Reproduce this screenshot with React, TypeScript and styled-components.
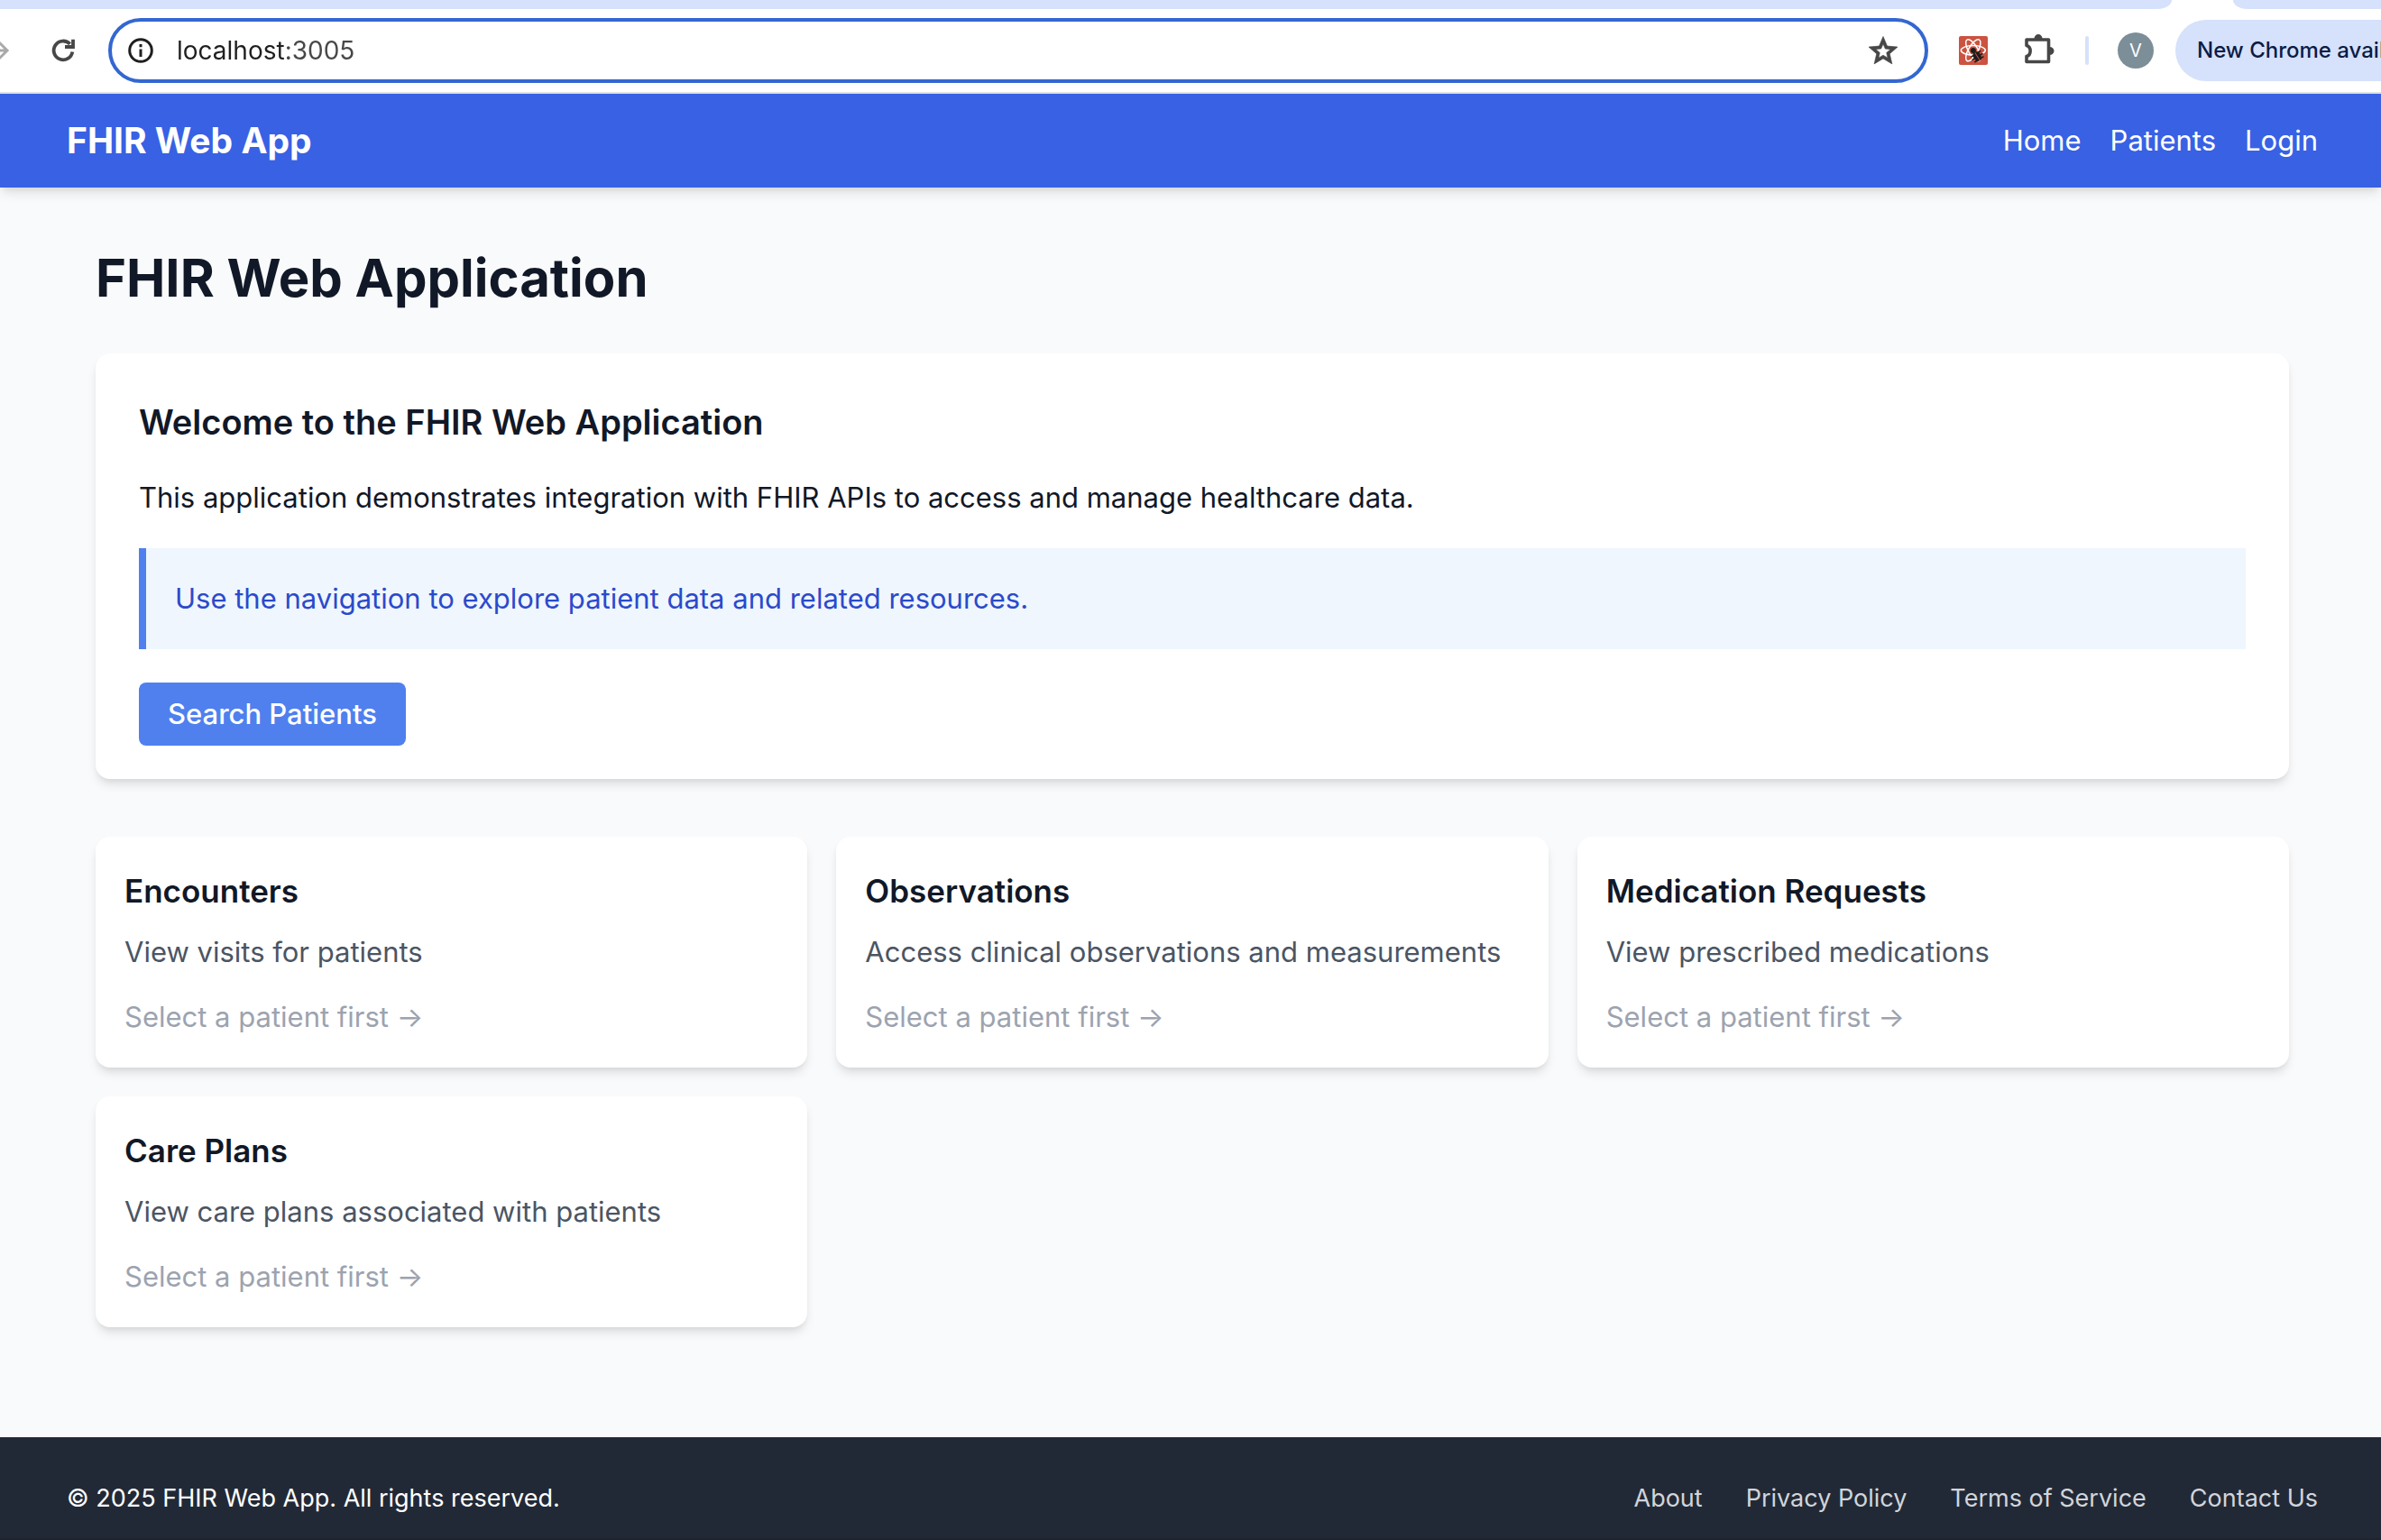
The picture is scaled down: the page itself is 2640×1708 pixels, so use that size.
import React from "react";
import styled, { createGlobalStyle } from "styled-components";

const GlobalStyle = createGlobalStyle`
  * { box-sizing: border-box; }
  body {
    margin: 0;
    background: #f9fafb;
    color: #111827;
    font-family: Inter, "Liberation Sans", sans-serif;
    font-size: 31px;
    line-height: 48px;
    -webkit-font-smoothing: antialiased;
  }
  h1, h2, h3, p { margin: 0; }
  a { color: inherit; text-decoration: none; }
  svg { display: block; flex: none; }
`;

const Page = styled.div`
  min-height: 100vh;
  display: flex;
  flex-direction: column;
  overflow-x: hidden;
`;

const TabStrip = styled.div`
  height: 10px;
  flex: none;
  display: flex;
  gap: 68px;
  background: #fff;
`;

const TabEdge = styled.div<{ $side: "left" | "right" }>`
  background: #d6e1fb;
  ${(p) =>
    p.$side === "left"
      ? "flex: 1; border-bottom-right-radius: 22px 14px;"
      : "width: 164px; border-bottom-left-radius: 22px 14px;"}
`;

const Toolbar = styled.div`
  height: 94px;
  flex: none;
  display: flex;
  align-items: center;
  background: #fff;
  border-bottom: 2px solid #dfe3e1;
`;

const IconButton = styled.button<{ $width: number }>`
  flex: none;
  width: ${(p) => p.$width}px;
  height: 64px;
  padding: 0;
  border: 0;
  background: none;
  display: flex;
  align-items: center;
  justify-content: center;
`;

const ForwardButton = styled(IconButton)`
  justify-content: flex-start;
  overflow: hidden;
`;

const AddressBar = styled.div`
  flex: 1;
  min-width: 0;
  height: 72px;
  display: flex;
  align-items: center;
  gap: 26px;
  margin: 0 18px 0 20px;
  padding: 0 30px 0 18px;
  border: 4px solid #3367d1;
  border-radius: 36px;
`;

/* The host is darker than the port: the text is painted by a two-stop background. */
const AddressInput = styled.input`
  flex: 1;
  min-width: 0;
  height: 40px;
  padding: 0;
  border: 0;
  outline: 0;
  background: linear-gradient(to right, #1f1f1f 120px, #474747 120px);
  background-clip: text;
  -webkit-background-clip: text;
  color: transparent;
  font: 400 28px/40px Inter, sans-serif;
`;

const Divider = styled.div`
  width: 4px;
  height: 32px;
  margin-left: 8px;
  flex: none;
  border-radius: 2px;
  background: #d6e1fb;
`;

const Avatar = styled.button`
  flex: none;
  width: 40px;
  height: 40px;
  margin: 0 24px 0 32px;
  padding: 0;
  border: 0;
  border-radius: 50%;
  background: #7c8e98;
  color: #fff;
  font: 400 20px/40px Inter, sans-serif;
`;

const UpdateButton = styled.button`
  flex: none;
  width: 300px;
  height: 68px;
  margin-right: -72px;
  padding: 0 0 0 24px;
  border: 0;
  border-radius: 34px;
  background: #d6e1fb;
  color: #0a1c46;
  font: 500 24px/40px Inter, sans-serif;
  text-align: left;
  white-space: nowrap;
`;

const NavBar = styled.header`
  height: 104px;
  flex: none;
  display: flex;
  align-items: center;
  justify-content: space-between;
  padding: 0 70px 0 74px;
  background: #3861e4;
  color: #fff;
  box-shadow: 0 8px 12px -2px rgba(0, 0, 0, 0.1), 0 4px 8px -4px rgba(0, 0, 0, 0.1);
`;

const Brand = styled.a`
  font-size: 39px;
  font-weight: 700;
  line-height: 56px;
`;

const NavLinks = styled.nav`
  display: flex;
  gap: 32px;
`;

const Main = styled.main`
  flex: 1;
  padding: 64px 102px 120px 106px;
`;

const PageTitle = styled.h1`
  font-size: 58px;
  font-weight: 700;
  line-height: 72px;
  margin-bottom: 48px;
`;

const Panel = styled.section`
  background: #fff;
  border-radius: 16px;
  box-shadow: 0 8px 12px -2px rgba(0, 0, 0, 0.1), 0 4px 8px -4px rgba(0, 0, 0, 0.1);
`;

const WelcomePanel = styled(Panel)`
  padding: 48px;
  margin-bottom: 64px;
`;

const WelcomeTitle = styled.h2`
  font-size: 38px;
  font-weight: 600;
  line-height: 56px;
  margin-bottom: 32px;
`;

const Notice = styled.p`
  margin: 32px 0 48px;
  padding: 32px;
  border-left: 8px solid #4f80ee;
  background: #eff6fe;
  color: #2b4acb;
`;

const ActionRow = styled.div`
  height: 48px;
  display: flex;
  align-items: center;
`;

const PrimaryButton = styled.button`
  flex: none;
  height: 70px;
  padding: 0 32px;
  border: 0;
  border-radius: 8px;
  background: #4f80ee;
  color: #fff;
  font: inherit;
  font-weight: 500;
`;

const CardGrid = styled.div`
  display: grid;
  grid-template-columns: repeat(3, 1fr);
  gap: 32px;
`;

const Card = styled(Panel)`
  padding: 32px;
`;

const CardTitle = styled.h3`
  font-size: 35px;
  font-weight: 600;
  line-height: 56px;
  margin-bottom: 16px;
`;

const CardText = styled.p`
  color: #4b5563;
  margin-bottom: 24px;
`;

const CardHint = styled.p`
  color: #9ca3af;
`;

const Footer = styled.footer`
  flex: none;
  display: flex;
  align-items: center;
  justify-content: space-between;
  padding: 48px 70px 24px 74px;
  background: #222936;
  border-bottom: 2px solid #1d232f;
  color: #fff;
  font-size: 27px;
  line-height: 40px;
`;

const FooterLinks = styled.nav`
  display: flex;
  gap: 48px;
  color: #d1d5db;
`;

const StarIcon = () => (
  <svg width="32" height="32" viewBox="2 1.7 20 20" fill="#474747" stroke="#474747" strokeWidth="0.4">
    <path d="m8.85 16.825 3.15-1.9 3.15 1.925-.825-3.6 2.775-2.4-3.65-.325-1.45-3.4-1.45 3.375-3.65.325 2.775 2.425zM5.825 21l1.625-7.025L2 9.25l7.2-.625L12 2l2.8 6.625 7.2.625-5.45 4.725L18.175 21 12 17.275z" />
  </svg>
);

const DevtoolsIcon = () => (
  <svg width="32" height="32" viewBox="0 0 32 32" fill="none">
    <rect width="32" height="32" rx="2" fill="#cb5340" />
    <g stroke="#fff" strokeWidth="1.5">
      <ellipse cx="15.8" cy="15.8" rx="13.5" ry="5.2" />
      <ellipse cx="15.8" cy="15.8" rx="13.5" ry="5.2" transform="rotate(60 15.8 15.8)" />
      <ellipse cx="15.8" cy="15.8" rx="13.5" ry="5.2" transform="rotate(120 15.8 15.8)" />
    </g>
    <path d="M15 18L25 16L28 25L18 30Z" fill="#cb5340" />
    <circle cx="15.9" cy="15.9" r="3" fill="#1d1d1d" />
    <g transform="rotate(-32 20 22)">
      <path d="M13.500 19.500H26.500M13 23H27M14 26.500H26" stroke="#1d1d1d" strokeWidth="1.6" />
      <ellipse cx="20" cy="22.5" rx="4.2" ry="5.5" fill="#1d1d1d" />
      <path d="M20 18V28" stroke="#cb5340" />
    </g>
  </svg>
);

const PuzzleIcon = () => (
  <svg width="38" height="44" viewBox="0 0 38 44" fill="none" stroke="#474747" strokeWidth="3.6" strokeLinejoin="round">
    <path d="M4 10H28.500V34.500H4V28.500C9.500 27 9.500 18 4 16.500Z" />
    <path d="M12.500 9A4.500 5 0 0 1 21.500 9ZM29.500 18A5 4.500 0 0 1 29.500 27Z" fill="#474747" stroke="none" />
  </svg>
);

const resources = [
  { title: "Encounters", text: "View visits for patients" },
  { title: "Observations", text: "Access clinical observations and measurements" },
  { title: "Medication Requests", text: "View prescribed medications" },
  { title: "Care Plans", text: "View care plans associated with patients" },
];

export default function App() {
  return (
    <Page>
      <GlobalStyle />
      <TabStrip>
        <TabEdge $side="left" />
        <TabEdge $side="right" />
      </TabStrip>
      <Toolbar>
        <ForwardButton $width={40} aria-label="Forward">
          <svg width="12" height="32" viewBox="0 0 12 32" fill="none" stroke="#a9a9a9" strokeWidth="3">
            <path d="M-10 16H7M-4 4L8 16L-4 28" />
          </svg>
        </ForwardButton>
        <IconButton $width={60} aria-label="Reload">
          <svg width="32" height="32" viewBox="0 0 32 32" fill="none" stroke="#474747" strokeWidth="3.8">
            <path d="M26.300 17.500A10.400 10.400 0 1 1 23.600 8.800" />
            <path d="M27 3.800V12H18" />
          </svg>
        </IconButton>
        <AddressBar>
          <svg width="28" height="28" viewBox="0 0 28 28" fill="none" stroke="#1f1f1f" strokeWidth="3">
            <circle cx="14" cy="14" r="12.3" />
            <path d="M14 12.500V21M14 7V10.200" />
          </svg>
          <AddressInput aria-label="Address" defaultValue="localhost:3005" />
          <StarIcon />
        </AddressBar>
        <IconButton $width={64} aria-label="React Developer Tools">
          <DevtoolsIcon />
        </IconButton>
        <IconButton $width={84} aria-label="Extensions">
          <PuzzleIcon />
        </IconButton>
        <Divider />
        <Avatar>V</Avatar>
        <UpdateButton>New Chrome available</UpdateButton>
      </Toolbar>
      <NavBar>
        <Brand href="#">FHIR Web App</Brand>
        <NavLinks>
          <a href="#home">Home</a>
          <a href="#patients">Patients</a>
          <a href="#login">Login</a>
        </NavLinks>
      </NavBar>
      <Main>
        <PageTitle>FHIR Web Application</PageTitle>
        <WelcomePanel>
          <WelcomeTitle>Welcome to the FHIR Web Application</WelcomeTitle>
          <p>This application demonstrates integration with FHIR APIs to access and manage healthcare data.</p>
          <Notice>Use the navigation to explore patient data and related resources.</Notice>
          <ActionRow>
            <PrimaryButton>Search Patients</PrimaryButton>
          </ActionRow>
        </WelcomePanel>
        <CardGrid>
          {resources.map((r) => (
            <Card key={r.title}>
              <CardTitle>{r.title}</CardTitle>
              <CardText>{r.text}</CardText>
              <CardHint>Select a patient first →</CardHint>
            </Card>
          ))}
        </CardGrid>
      </Main>
      <Footer>
        <span>© 2025 FHIR Web App. All rights reserved.</span>
        <FooterLinks>
          <a href="#about">About</a>
          <a href="#privacy">Privacy Policy</a>
          <a href="#terms">Terms of Service</a>
          <a href="#contact">Contact Us</a>
        </FooterLinks>
      </Footer>
    </Page>
  );
}
